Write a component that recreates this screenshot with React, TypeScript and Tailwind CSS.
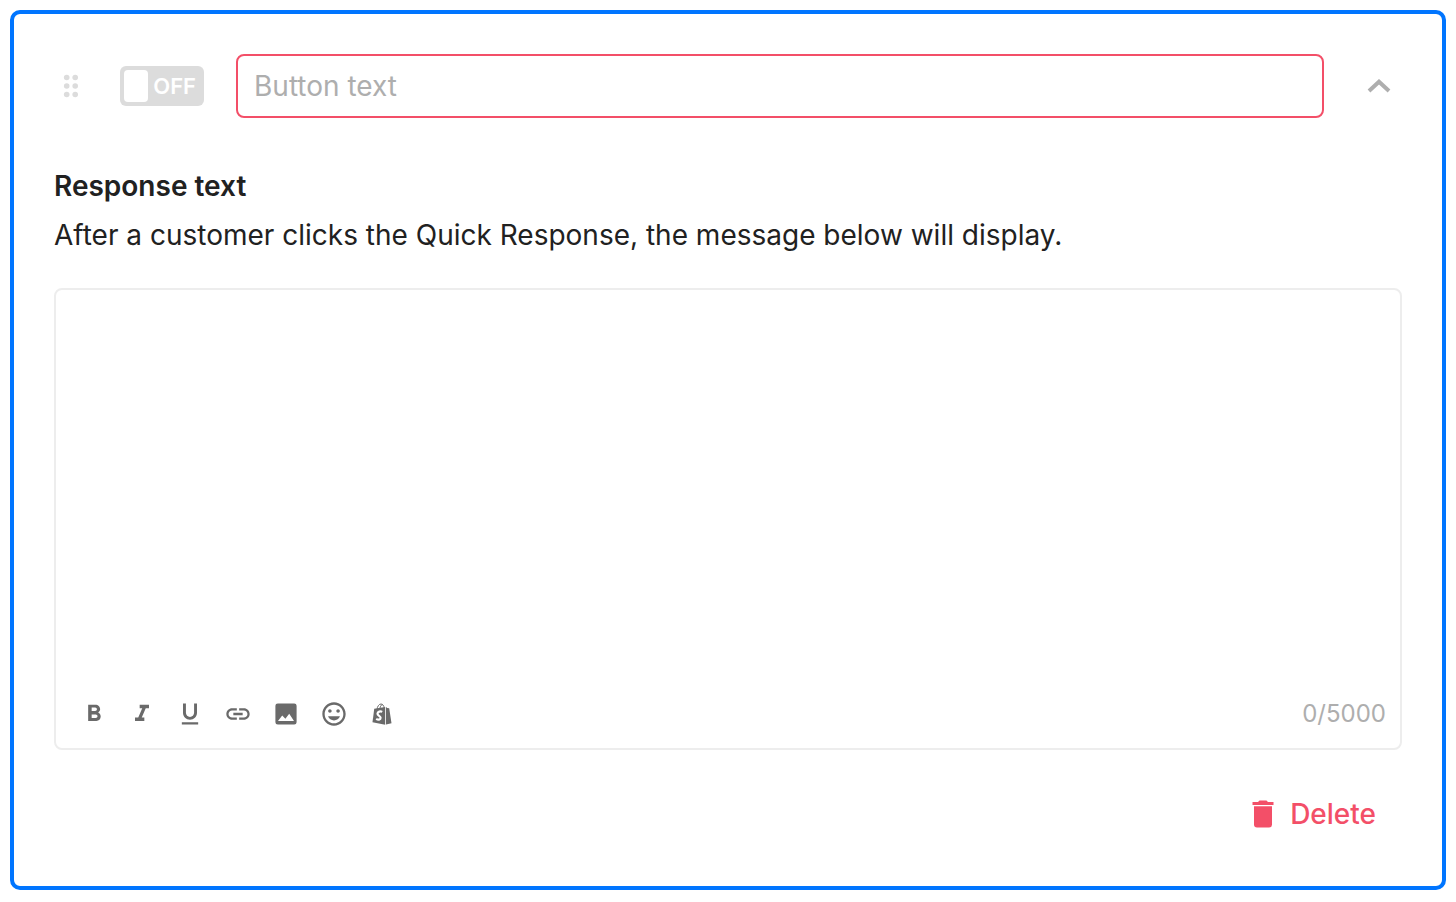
import { useState } from 'react';
import { MdFormatBold, MdFormatItalic, MdFormatUnderlined, MdLink, MdMood } from 'react-icons/md';

const MAX_LENGTH = 5000;

const ImageIcon = () => (
  <svg width="22" height="22" viewBox="0 0 22 22" fill="currentColor" fillRule="evenodd">
    <path d="M2.8 0.4H19.2A2.4 2.4 0 0 1 21.6 2.8V19.2A2.4 2.4 0 0 1 19.2 21.6H2.8A2.4 2.4 0 0 1 0.4 19.2V2.8A2.4 2.4 0 0 1 2.8 0.4ZM3 18H19L14.2 10.8L10.4 15.8L7.2 12.6Z" />
  </svg>
);

const ShopifyIcon = () => (
  <svg width="20" height="22" viewBox="0 0 20 22" fill="none">
    <path
      d="M5 6.5C5.3 3.5 7 1 9 1C11 1 12 3 12.2 5M7.8 6C8.3 3 9.6 1.2 10.8 2"
      stroke="currentColor"
      strokeWidth="1"
    />
    <path d="M2.2 5.8L13.2 4V21.8L0.5 19.3Z" fill="currentColor" />
    <path d="M14 4L15.2 5.1L17.2 5.3L19.5 20.2L14 21.6Z" fill="currentColor" />
    <path
      d="M10.2 8.9C8.5 8 5.5 8.5 5.5 10.7C5.5 12.8 8.6 12.9 8.6 14.8C8.6 17 6 17 4.2 15.8"
      stroke="white"
      strokeWidth="2.2"
    />
  </svg>
);

const toolbar = [
  { label: 'Bold', icon: <MdFormatBold size={28} /> },
  { label: 'Italic', icon: <MdFormatItalic size={28} /> },
  { label: 'Underline', icon: <MdFormatUnderlined size={28} /> },
  { label: 'Insert link', icon: <MdLink size={28} /> },
  { label: 'Insert image', icon: <ImageIcon /> },
  { label: 'Insert emoji', icon: <MdMood size={28} /> },
  { label: 'Insert Shopify product', icon: <ShopifyIcon /> },
];

const App = () => {
  const [enabled, setEnabled] = useState(false);
  const [buttonText, setButtonText] = useState('');
  const [response, setResponse] = useState('');

  return (
    <div className="p-[10px] pb-3 bg-white font-['Inter',sans-serif] text-[#212121]">
      <section className="rounded-[10px] border-4 border-[#0075ff] px-10 pt-10 pb-12">
        {/* Header row */}
        <div className="flex items-center">
          <button type="button" aria-label="Reorder" className="flex w-[34px] justify-center text-[#dcdcdc]">
            <svg width="16" height="24" viewBox="0 0 16 24" fill="currentColor">
              <circle cx="3.7" cy="3.5" r="2.8" />
              <circle cx="12.2" cy="3.5" r="2.8" />
              <circle cx="3.7" cy="12" r="2.8" />
              <circle cx="12.2" cy="12" r="2.8" />
              <circle cx="3.7" cy="20.5" r="2.8" />
              <circle cx="12.2" cy="20.5" r="2.8" />
            </svg>
          </button>

          <button
            type="button"
            role="switch"
            aria-checked={enabled}
            aria-label="Enable quick response"
            onClick={() => setEnabled(!enabled)}
            className="ml-8 flex h-10 w-[84px] shrink-0 items-center justify-between rounded-md bg-[#dcdcdc] py-1 pl-1 pr-2 text-[22px] font-semibold text-white"
          >
            <span className="h-8 w-6 rounded bg-white" />
            {enabled ? 'ON' : 'OFF'}
          </button>

          <input
            type="text"
            aria-label="Button text"
            placeholder="Button text"
            value={buttonText}
            onChange={(e) => setButtonText(e.target.value)}
            className="ml-8 h-16 min-w-0 flex-1 rounded-lg border-2 border-[#f34f68] px-4 text-[28px] outline-none placeholder:text-[#aeaeae]"
          />

          <button type="button" aria-label="Collapse" className="ml-8 flex size-[46px] items-center justify-center text-[#aeaeae]">
            <svg width="24" height="14" viewBox="0 0 24 14" fill="none" stroke="currentColor" strokeWidth="4">
              <path d="M2 12L12 2.7L22 12" />
            </svg>
          </button>
        </div>

        {/* Response */}
        <label htmlFor="response" className="mt-12 block text-[28px] leading-10 font-semibold">
          Response text
        </label>
        <p className="mt-2 text-[28px] leading-[42px]">
          After a customer clicks the Quick Response, the message below will display.
        </p>

        <div className="mt-8 rounded-lg border-2 border-[#ededed]">
          <textarea
            id="response"
            maxLength={MAX_LENGTH}
            value={response}
            onChange={(e) => setResponse(e.target.value)}
            className="block h-[400px] w-full resize-none px-4 py-3 text-[28px] outline-none"
          />
          <div className="flex items-start justify-between px-[14px] pb-[10px]">
            <div className="flex">
              {toolbar.map((item) => (
                <button
                  key={item.label}
                  type="button"
                  aria-label={item.label}
                  className="flex size-12 items-center justify-center text-[#6a6a6a]"
                >
                  {item.icon}
                </button>
              ))}
            </div>
            <span className="text-[24px] leading-[48px] text-[#aeaeae]">{response.length}/{MAX_LENGTH}</span>
          </div>
        </div>

        <div className="mt-10 flex justify-end pr-[26px]">
          <button type="button" className="flex h-12 items-center gap-4 text-[28px] font-medium text-[#f34f68]">
            <svg width="22" height="28" viewBox="0 0 22 28" fill="currentColor">
              <path d="M0.5 2H6L7.5 0.5H14.5L16 2H21.5V5H0.5Z" />
              <path d="M2 6.2H20V24.5A3 3 0 0 1 17 27.5H5A3 3 0 0 1 2 24.5Z" />
            </svg>
            Delete
          </button>
        </div>
      </section>
    </div>
  );
};

export default App;
